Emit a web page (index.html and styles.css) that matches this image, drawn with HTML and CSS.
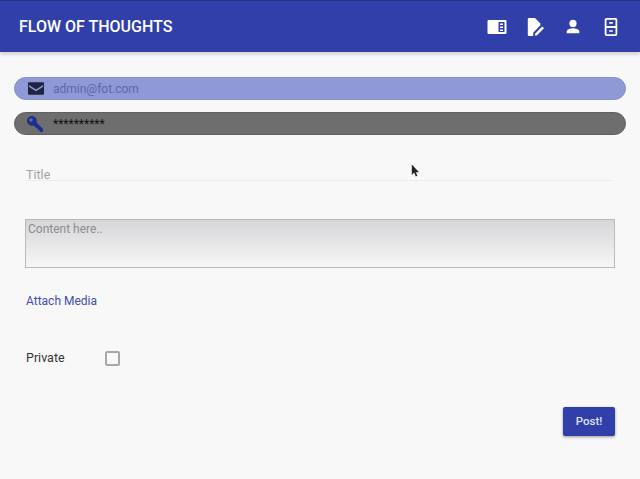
FILE: index.html
```html
<!DOCTYPE html>
<html lang="en">
<head>
<meta charset="utf-8">
<title>Flow of Thoughts</title>
<link rel="stylesheet" href="styles.css">
</head>
<body>
<header class="appbar">
  <h1 class="brand">FLOW OF THOUGHTS</h1>
  <nav class="actions">
    <svg class="icon icon-wide" viewBox="0 0 20 16"><path fill="#fff" fill-rule="evenodd" d="M1.500 1h17a1 1 0 0 1 1 1v12a1 1 0 0 1-1 1h-17a1 1 0 0 1-1-1V2a1 1 0 0 1 1-1zM11.500 3v10h6V3zm1.500 1.500h3V6h-3zm0 3h3V9h-3zm0 3h3V12h-3z"/></svg>
    <svg class="icon" viewBox="0 0 20 20"><path fill="#fff" d="M3 0h7l6 6v2L8 16.500V20H3a1 1 0 0 1-1-1V1a1 1 0 0 1 1-1z"/><path fill="#fff" d="M10 19.500v-2l8-8 2 2-8 8z"/></svg>
    <svg class="icon" viewBox="0 0 20 20"><circle cx="10" cy="6" r="4" fill="#fff"/><path fill="#fff" d="M3 17v-2c0-2.500 4.500-3.700 7-3.700s7 1.200 7 3.700v2z"/></svg>
    <svg class="icon" viewBox="0 0 20 20"><path fill="#fff" fill-rule="evenodd" d="M5 0h10a2 2 0 0 1 2 2v16a2 2 0 0 1-2 2H5a2 2 0 0 1-2-2V2a2 2 0 0 1 2-2zm0 2v7h10V2zm0 9v7h10v-7zm3-6.500h4v1.800H8zm0 9h4v1.800H8z"/></svg>
  </nav>
</header>
<main class="content">
  <div class="pill pill-email">
    <svg class="pill-icon" viewBox="0 0 18 14"><path fill="#1f2440" fill-rule="evenodd" d="M1 0h16a1 1 0 0 1 1 1v12a1 1 0 0 1-1 1H1a1 1 0 0 1-1-1V1a1 1 0 0 1 1-1zm0 3v2l8 5 8-5V3L9 8z"/></svg>
    <span class="pill-text email-text">admin@fot.com</span>
  </div>
  <div class="pill pill-pass">
    <svg class="pill-icon key" viewBox="0 0 18 18"><path fill="#1e2c96" fill-rule="evenodd" d="M5.500 0a5.500 5.500 0 0 1 5.200 7.300L18 14.600V18h-3.500v-2h-2v-2h-1.500L7.300 10.700A5.500 5.500 0 1 1 5.500 0zM4.500 2.500a2 2 0 1 0 0 4 2 2 0 0 0 0-4z"/></svg>
    <span class="pill-text pass-text">**********</span>
  </div>
  <div class="title-field">Title</div>
  <div class="content-box">Content here..</div>
  <a class="attach" href="#">Attach Media</a>
  <div class="private">
    <span class="private-label">Private</span>
    <span class="checkbox"></span>
  </div>
  <div class="submit-row"><button class="post" type="button">Post!</button></div>
  <svg class="cursor" viewBox="0 0 10 16"><path fill="#222" d="M1 0v13l3-3 2 5 2-1-2-4.500h4z"/></svg>
</main>
</body>
</html>
```
FILE: styles.css
```css
* { box-sizing: border-box; }
html, body { margin: 0; padding: 0; }
body {
  width: 640px;
  height: 479px;
  overflow: hidden;
  background: #f8f8f9;
  font-family: Roboto, "Liberation Sans", sans-serif;
  display: flex;
  flex-direction: column;
}
.appbar {
  height: 52px;
  flex: none;
  background: #303fa9;
  border-top: 1px solid #27327f;
  display: flex;
  align-items: center;
  justify-content: space-between;
  padding: 0 20px 0 19px;
  box-shadow: 0 2px 4px rgba(0,0,0,.18);
}
.brand {
  margin: 0;
  font-size: 16px;
  font-weight: 500;
  color: #fff;
}
.actions { display: flex; align-items: center; gap: 20px; }
.icon { width: 18px; height: 18px; display: block; }
.icon-wide { width: 20px; height: 20px; margin-right: -1px; margin-left: -1px; }
.content {
  position: relative;
  flex: 1;
  padding: 25px 14px 0;
  display: flex;
  flex-direction: column;
}
.pill {
  height: 23px;
  border-radius: 12px;
  display: flex;
  align-items: center;
  padding-left: 13px;
  flex: none;
}
.pill-email { background: #8f99d6; border: 1px solid #8791d0; }
.pill-pass { background: #6e6e6e; margin-top: 12px; border: 1px solid #5f5f66; }
.pill-icon { width: 16px; height: 13px; display: block; flex: none; }
.key { width: 16px; height: 16px; margin-left: -1px; margin-right: 1px; }
.pill-text { font-size: 12px; margin-left: 9px; line-height: 14px; }
.email-text { color: #5e67a6; }
.pass-text { color: #111; }
.title-field {
  margin: 30px 12px 0;
  height: 16px;
  padding-top: 2px;
  font-size: 12.500px;
  line-height: 15px;
  color: #a3a3a8;
  border-bottom: 1px solid #ececee;
  flex: none;
}
.content-box {
  margin: 38px 11px 0;
  height: 49px;
  flex: none;
  border: 1px solid #b8b8c0;
  background: linear-gradient(#d6d6d8, #f6f6f7);
  font-size: 12px;
  line-height: 16px;
  padding: 1px 2px;
  color: #8c8c92;
}
.attach {
  margin: 26px 12px 0;
  font-size: 12px;
  line-height: 14px;
  color: #3f4db0;
  text-decoration: none;
  flex: none;
}
.private {
  margin: 42px 12px 0;
  display: flex;
  align-items: center;
  flex: none;
  height: 16px;
}
.private-label { font-size: 12.500px; color: #333; width: 79px; position: relative; top: -1px; }
.checkbox {
  width: 15px;
  height: 15px;
  border: 2px solid #a8a8a8;
  border-radius: 2px;
  background: #f8f8f9;
}
.submit-row {
  margin-top: 41px;
  padding-right: 11px;
  display: flex;
  justify-content: flex-end;
  flex: none;
}
.post {
  width: 52px;
  height: 29px;
  border: 0;
  border-radius: 2px;
  background: #303fa9;
  color: #dfe2f5;
  font: 500 11.500px Roboto, "Liberation Sans", sans-serif;
  box-shadow: 0 1px 3px rgba(0,0,0,.4);
  padding: 0 0 1px;
}
.cursor {
  position: absolute;
  left: 411px;
  top: 112px;
  width: 8px;
  height: 14px;
}
```
